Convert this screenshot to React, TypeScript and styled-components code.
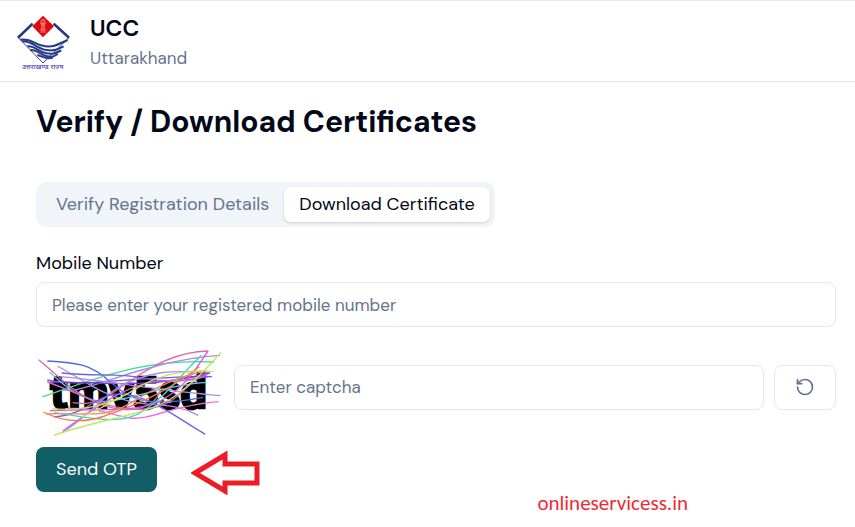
import React from "react";
import styled, { createGlobalStyle } from "styled-components";
import { RotateCcw } from "lucide-react";

const GlobalStyle = createGlobalStyle`
  *, *::before, *::after { box-sizing: border-box; }
  body {
    margin: 0;
    background: #ffffff;
    color: #020817;
    font-family: "DM Sans", Inter, "Open Sans", sans-serif;
    font-size: 17px;
    line-height: 24px;
  }
  button, input { font: inherit; color: inherit; }
`;

const Header = styled.header`
  display: flex;
  align-items: center;
  gap: 19px;
  padding: 11px 15px 9px;
  border-top: 1px solid #e5e7eb;
  border-bottom: 1px solid #e5e7eb;
`;
const Brand = styled.div`
  display: flex;
  flex-direction: column;
`;
const BrandName = styled.span`
  font-size: 23px;
  line-height: 32px;
  font-weight: 600;
`;
const BrandRegion = styled.span`
  line-height: 28px;
  color: #64748b;
`;
const Main = styled.main`
  padding: 20px 19px 12px 36px;
`;
const Title = styled.h1`
  margin: 0 0 40px;
  font-size: 30px;
  line-height: 40px;
  font-weight: 700;
`;
const TabList = styled.div`
  display: inline-flex;
  padding: 5px;
  border-radius: 10px;
  background: #f1f5f9;
`;
const Tab = styled.button<{ $active?: boolean }>`
  height: 35px;
  padding: 0 15px 2px;
  border: 0;
  border-radius: 7px;
  font-size: 18px;
  white-space: nowrap;
  cursor: pointer;
  color: ${(p) => (p.$active ? "#020817" : "#64748b")};
  background: ${(p) => (p.$active ? "#ffffff" : "transparent")};
  box-shadow: ${(p) => (p.$active ? "0 1px 3px rgba(15, 23, 42, 0.16)" : "none")};
`;
const Form = styled.form`
  display: flex;
  flex-direction: column;
  margin-top: 24px;
`;
const Label = styled.label`
  margin-bottom: 7px;
  font-size: 18px;
`;
const Field = styled.input`
  flex: 1;
  width: 100%;
  min-width: 0;
  min-height: 45px;
  padding: 0 15px;
  border: 1px solid #e2e8f0;
  border-radius: 8px;
  background: #ffffff;
  &::placeholder { color: #64748b; opacity: 1; }
`;
const CaptchaRow = styled.div`
  display: flex;
  align-items: center;
  gap: 10px;
  margin-top: 15px;
`;
const Captcha = styled.svg`
  flex: none;
  width: 188px;
  height: 90px;
  overflow: visible;
`;
const RefreshButton = styled.button`
  display: grid;
  place-items: center;
  flex: none;
  width: 62px;
  height: 45px;
  padding: 0;
  border: 1px solid #e2e8f0;
  border-radius: 8px;
  background: #ffffff;
  color: #64748b;
  cursor: pointer;
`;
const Actions = styled.div`
  display: flex;
  align-items: flex-start;
  margin-top: 15px;
`;
const SubmitButton = styled.button`
  flex: none;
  height: 45px;
  padding: 0 20px 2px;
  border: 0;
  border-radius: 8px;
  font-size: 18px;
  background: #115e67;
  color: #f8fafc;
  cursor: pointer;
`;
const Pointer = styled.svg`
  flex: none;
  margin: 3px 0 0 34px;
`;
const SiteCredit = styled.span`
  margin: 44px 148px 0 auto;
  font-family: Carlito, "Open Sans", "Noto Sans", sans-serif;
  font-size: 21px;
  color: #ee2b32;
`;

const strokes: [string, string][] = [
  ["#e0689a", "M26 59 C75 98 125 158 205 190 S370 215 392 150"],
  ["#4a6be0", "M52 63 C145 67 183 75 237 122 S330 208 520 172"],
  ["#b28be8", "M82 78 C170 125 215 165 300 184 S430 185 505 226"],
  ["#3ddc90", "M37 170 C190 120 330 55 552 66"],
  ["#e0689a", "M128 188 C210 202 250 154 302 121 S430 35 535 33"],
  ["#a88bea", "M135 150 C260 120 380 60 570 46"],
  ["#6a5be0", "M52 120 C150 145 340 105 546 110"],
  ["#7040d0", "M53 127 C190 122 330 152 540 99"],
  ["#7560df", "M95 99 C200 110 270 98 345 115 S480 118 540 109"],
  ["#b28be8", "M90 110 C220 120 370 150 572 167"],
  ["#65c8ef", "M59 97 C110 145 164 187 230 184 S400 135 530 127"],
  ["#cc60d9", "M52 126 C150 160 240 216 345 207 S460 130 538 93"],
  ["#dc54e2", "M60 212 C220 205 320 220 395 180 S500 82 534 33"],
  ["#ee70df", "M105 206 C210 200 240 226 300 234 S430 194 566 185"],
  ["#cf63d8", "M98 274 C180 214 300 120 410 122 S500 113 532 104"],
  ["#b08be6", "M98 277 C210 206 220 150 320 117 S440 100 530 93"],
  ["#7560df", "M73 231 C180 223 205 150 288 163 S410 214 526 283"],
  ["#35d9bd", "M72 218 C180 232 270 260 340 213 S430 129 514 46"],
  ["#ed7c4d", "M40 216 C95 244 160 250 224 228 S390 171 508 80"],
  ["#ee8a60", "M48 222 C155 216 220 239 300 190 S450 105 528 94"],
  ["#c9e35e", "M72 286 C190 241 360 225 436 167 S535 78 573 37"],
  ["#c9e35e", "M67 206 C175 216 252 188 315 148 S450 87 550 95"],
  ["#d6ee75", "M155 230 C205 217 231 186 277 171"],
];

const Emblem = styled.svg`
  flex: none;
`;

const StateEmblem = () => (
  <Emblem width="56" height="60" viewBox="45 34 168 180" role="img" aria-label="उत्तराखण्ड राज्य">
    <path d="M98 70 L55 111 L129 187 L207 111 L161 70" fill="none" stroke="#35437f" strokeWidth="3" />
    <path d="M98 69 L54 111 M161 69 L207 111" fill="none" stroke="#27377c" strokeWidth="8" />
    <path d="M99 75 L61 112 M160 75 L200 112" fill="none" stroke="#ffffff" strokeWidth="1.5" />
    <path d="M129 45 L162 77 L129 110 L97 77 Z" fill="#df080d" />
    <path
      d="M123 59 Q129 53 135 59 V67 Q129 72 123 67 Z M121 67 L125 73 H133 L137 67 M125 74 V87 M133 74 V87 M129 56 V92 M119 88 H139 M121 94 H137"
      fill="none"
      stroke="#f8b7ac"
      strokeWidth="2"
    />
    <g fill="none" stroke="#263b88" strokeWidth="6">
      <path d="M61 117 C96 112 106 134 136 137 S176 129 203 118" />
      <path d="M66 122 C98 121 111 144 139 148 S171 145 191 137" />
      <path d="M82 137 C105 135 117 154 139 158 S168 157 184 149" />
      <path d="M91 148 C112 147 125 163 141 167 S164 167 173 160" />
      <path d="M112 163 C125 166 143 180 159 170" />
    </g>
    <text x="128" y="205" textAnchor="middle" fontSize="21" fontWeight="500" fill="#5137c4" fontFamily="Noto Sans Devanagari, Noto Sans, sans-serif">उत्तराखण्ड राज्य</text>
  </Emblem>
);

export default function App() {
  return (
    <>
      <GlobalStyle />
      <Header>
        <StateEmblem />
        <Brand>
          <BrandName>UCC</BrandName>
          <BrandRegion>Uttarakhand</BrandRegion>
        </Brand>
      </Header>
      <Main>
        <Title>Verify / Download Certificates</Title>
        <TabList role="tablist">
          <Tab type="button" role="tab" aria-selected={false}>Verify Registration Details</Tab>
          <Tab type="button" role="tab" aria-selected $active>Download Certificate</Tab>
        </TabList>
        <Form onSubmit={(e) => e.preventDefault()}>
          <Label htmlFor="mobile">Mobile Number</Label>
          <Field id="mobile" type="tel" placeholder="Please enter your registered mobile number" />
          <CaptchaRow>
            <Captcha viewBox="18 6 564 270" role="img" aria-label="Captcha">
              <text x="60" y="204" fontFamily="Noto Sans CJK JP, sans-serif" fontSize="128" fontWeight="700" stroke="#000000" strokeWidth="8">tmv5sd</text>
              {strokes.map(([color, d]) => (
                <path key={d} d={d} fill="none" stroke={color} strokeWidth="4" />
              ))}
            </Captcha>
            <Field type="text" aria-label="Enter captcha" placeholder="Enter captcha" />
            <RefreshButton type="button" aria-label="Refresh captcha">
              <RotateCcw size={20} strokeWidth={2} aria-hidden="true" />
            </RefreshButton>
          </CaptchaRow>
          <Actions>
            <SubmitButton type="submit">Send OTP</SubmitButton>
            <Pointer width="69" height="45" viewBox="0 0 69 45" aria-hidden="true">
              <path d="M4 23 L34 5 V14 H66 V33 H34 V41 Z" fill="none" stroke="#ed1c24" strokeWidth="5" />
            </Pointer>
            <SiteCredit>onlineservicess.in</SiteCredit>
          </Actions>
        </Form>
      </Main>
    </>
  );
}
